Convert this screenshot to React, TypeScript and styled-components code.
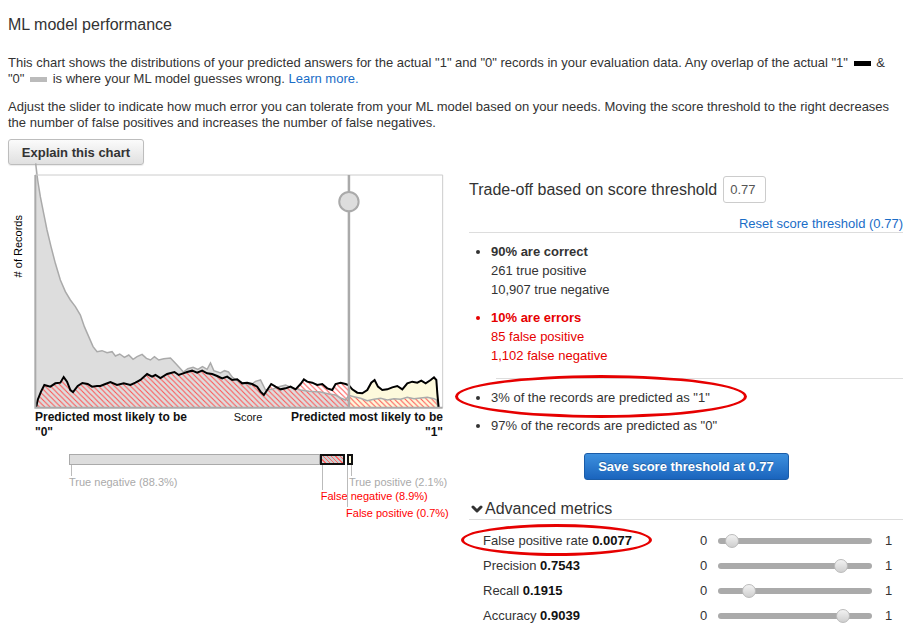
import React from 'react';
import styled, { createGlobalStyle, css } from 'styled-components';
import { ChevronDown } from 'lucide-react';

const FONT = '"Liberation Sans", Arial, Helvetica, sans-serif';
const RED = '#e60000';
const LINK = '#1a6dc7';

const GlobalStyle = createGlobalStyle`
  body {
    margin: 0;
    background: #fff;
    font-family: ${FONT};
    font-size: 13px;
    color: #333;
  }
`;

const Page = styled.div`
  width: 907px;
  box-sizing: border-box;
  padding: 15px 4px 0 8px;
`;

const Title = styled.h1`
  margin: 0;
  font-size: 16px;
  font-weight: normal;
  line-height: 20px;
  color: #333;
`;

const Paragraph = styled.p<{ $top: number }>`
  margin: ${({ $top }) => $top}px 0 0;
  line-height: 16px;
  white-space: nowrap;
`;

const Swatch = styled.span<{ $color: string }>`
  display: inline-block;
  width: 17px;
  height: 5px;
  margin: 0 2px;
  vertical-align: middle;
  background: ${({ $color }) => $color};
`;

const Link = styled.a`
  color: ${LINK};
  text-decoration: none;
  cursor: pointer;
`;

const ExplainButton = styled.button`
  margin-top: 8px;
  width: 136px;
  height: 26px;
  padding: 0;
  font: bold 13px ${FONT};
  color: #333;
  background: linear-gradient(#fbfbfb, #e0e0e0);
  border: 1px solid #bdbdbd;
  border-radius: 3px;
  box-shadow: 0 1px 1px rgba(0, 0, 0, 0.08);
`;

const Main = styled.div`
  display: flex;
  align-items: flex-start;
  gap: 8px;
`;

/* ---------- left: distribution chart ---------- */

const LeftColumn = styled.div`
  width: 453px;
  flex-shrink: 0;
`;

const ChartRow = styled.div`
  display: flex;
  margin-top: 10px;
`;

const YAxisLabel = styled.div`
  width: 27px;
  padding: 40px 0 0 4px;
  box-sizing: border-box;

  span {
    display: block;
    writing-mode: vertical-rl;
    transform: rotate(180deg);
    font-size: 11px;
    line-height: 13px;
    color: #000;
  }
`;

const ChartBox = styled.div`
  width: 408px;
  height: 233px;

  svg {
    display: block;
    width: 100%;
    height: 100%;
    overflow: visible;
  }
`;

const AxisLabels = styled.div`
  display: flex;
  justify-content: space-between;
  width: 408px;
  margin: 2px 0 0 27px;
  font-size: 12px;
  font-weight: bold;
  line-height: 15px;
  color: #111;
`;

const AxisEnd = styled.div<{ $align: 'left' | 'right' }>`
  text-align: ${({ $align }) => $align};
`;

const ScoreLabel = styled.div`
  margin-left: 18px;
  font-size: 11px;
  font-weight: normal;
`;

const BarWrap = styled.div`
  position: relative;
  width: 284px;
  height: 11px;
  margin: 14px 0 0 61px;
  display: flex;
`;

const segmentLook = {
  tn: css`
    background: #ddd;
    border: 1px solid #aaa;
  `,
  fn: css`
    background: repeating-linear-gradient(45deg, #ccc 0 2px, #f66 2px 3px);
    border: 2px solid #111;
  `,
  fp: css`
    background: #fff;
  `,
  tp: css`
    background: #fdf9dc;
    border: 2px solid #111;
  `,
};

type SegmentKind = keyof typeof segmentLook;

const Segment = styled.div<{ $kind: SegmentKind }>`
  box-sizing: border-box;
  height: 100%;
  ${({ $kind }) => segmentLook[$kind]}
`;

const Callout = styled.div`
  position: absolute;
  top: 100%;
  display: flex;
  flex-direction: column;
  align-items: flex-start;
`;

const Tick = styled.div<{ $length: number }>`
  width: 1px;
  height: ${({ $length }) => $length}px;
  margin-left: 2px;
  background: #bbb;
`;

const CalloutText = styled.div<{ $error?: boolean; $shift: number }>`
  margin-left: ${({ $shift }) => $shift}px;
  font-size: 11px;
  line-height: 13px;
  white-space: nowrap;
  color: ${({ $error }) => ($error ? '#f00' : '#aaa')};
`;

/* ---------- right: threshold summary ---------- */

const RightColumn = styled.div`
  width: 434px;
`;

const HeaderRow = styled.div`
  display: flex;
  align-items: center;
  gap: 6px;
  margin-top: 11px;
`;

const Heading = styled.h2`
  margin: 0;
  font-size: 16px;
  font-weight: normal;
  line-height: 20px;
  color: #333;
`;

const ThresholdInput = styled.input`
  width: 43px;
  height: 27px;
  box-sizing: border-box;
  padding: 0 0 0 6px;
  font: 13px ${FONT};
  color: #555;
  border: 1px solid #ccc;
  border-radius: 3px;
`;

const ResetLink = styled(Link)`
  display: block;
  margin-top: 13px;
  text-align: right;
  line-height: 16px;
`;

const Divider = styled.div<{ $inset?: number }>`
  height: 1px;
  margin-left: ${({ $inset = 0 }) => $inset}px;
  background: #ddd;
`;

const StatList = styled.ul<{ $bottom: number }>`
  margin: 0;
  padding: 9px 0 ${({ $bottom }) => $bottom}px 22px;
  list-style: disc;
`;

const StatItem = styled.li<{ $error?: boolean }>`
  position: relative;
  line-height: 19px;
  color: ${({ $error }) => ($error ? RED : '#333')};

  & + & {
    margin-top: 9px;
  }
`;

const Highlight = styled.span<{ $left: number; $top: number; $w: number; $h: number }>`
  position: absolute;
  left: ${({ $left }) => $left}px;
  top: ${({ $top }) => $top}px;
  width: ${({ $w }) => $w}px;
  height: ${({ $h }) => $h}px;
  box-sizing: border-box;
  border: 3px solid ${RED};
  border-radius: 50%;
  pointer-events: none;
`;

const SaveButton = styled.button`
  display: block;
  width: 205px;
  height: 27px;
  margin: 18px auto 0;
  font: bold 13px ${FONT};
  color: #fff;
  background: linear-gradient(#3d90de, #1a64bd);
  border: 1px solid #1a5ca8;
  border-radius: 3px;
  text-shadow: 0 -1px 0 rgba(0, 0, 0, 0.25);
`;

const AdvancedHeader = styled.div`
  display: flex;
  align-items: center;
  gap: 0;
  margin-top: 19px;
  font-size: 16px;
  line-height: 20px;
  color: #333;
`;

const MetricList = styled.div`
  margin-top: 4px;
  padding-top: 4px;
`;

const MetricRow = styled.div`
  position: relative;
  display: grid;
  grid-template-columns: 1fr 18px 154px 31px;
  align-items: center;
  height: 25px;
  padding-left: 14px;
  color: #333;

  b {
    color: #111;
  }
`;

const RangeEnd = styled.span<{ $pad?: number }>`
  padding-left: ${({ $pad = 0 }) => $pad}px;
  color: #333;
`;

const Track = styled.div`
  position: relative;
  height: 6px;
  border-radius: 3px;
  background: #aaa;
`;

const Thumb = styled.div`
  position: absolute;
  top: 50%;
  width: 14px;
  height: 14px;
  margin: -7px 0 0 -7px;
  box-sizing: border-box;
  border-radius: 50%;
  border: 1px solid #bbb;
  background: linear-gradient(#f2f2f2, #cfcfcf);
`;

/* ---------- chart data (drawn in a 3x coordinate space) ---------- */

const actualZero: number[][] = [
  [106, 10], [112, 60], [120, 110], [130, 160], [140, 210], [152, 260], [165, 310],
  [180, 360], [195, 395], [210, 420], [225, 440], [240, 465], [252, 500], [265, 530],
  [278, 560], [290, 575], [305, 572], [320, 578], [335, 575], [345, 588], [358, 582],
  [372, 592], [385, 585], [398, 598], [410, 590], [425, 583], [438, 595], [450, 600],
  [462, 590], [475, 600], [490, 596], [510, 594], [525, 610], [549, 636], [562, 626],
  [578, 622], [592, 628], [606, 620], [620, 628], [630, 609], [640, 632], [660, 639],
  [672, 632], [684, 636], [696, 652], [708, 660], [725, 668], [750, 675], [765, 664],
  [780, 660], [795, 690], [815, 688], [835, 680], [855, 675], [875, 684], [900, 690],
  [925, 694], [960, 696], [985, 702], [1005, 705], [1020, 714], [1035, 720], [1045, 706],
  [1060, 710], [1080, 715], [1100, 722], [1120, 718], [1140, 715], [1160, 720],
  [1180, 716], [1200, 718], [1220, 712], [1240, 716], [1260, 714], [1280, 712],
  [1300, 716], [1308, 720], [1312, 743],
];

const actualOne: number[][] = [
  [107, 743], [112, 720], [122, 695], [132, 675], [150, 680], [165, 670], [180, 668],
  [190, 651], [200, 665], [210, 690], [218, 696], [232, 678], [246, 669], [262, 672],
  [275, 680], [290, 678], [300, 678], [315, 672], [330, 666], [350, 675], [370, 670],
  [390, 675], [405, 668], [420, 660], [440, 642], [455, 650], [465, 645], [480, 654],
  [500, 642], [522, 636], [535, 645], [548, 640], [560, 636], [575, 632], [590, 638],
  [605, 632], [620, 640], [635, 642], [650, 648], [665, 655], [680, 650], [695, 660],
  [710, 658], [725, 670], [740, 668], [755, 672], [770, 680], [780, 695], [790, 705],
  [800, 690], [812, 672], [825, 680], [840, 688], [855, 685], [870, 680], [885, 688],
  [900, 672], [910, 658], [920, 665], [935, 668], [950, 675], [965, 672], [980, 685],
  [995, 690], [1005, 672], [1020, 668], [1035, 672], [1045, 676], [1055, 688],
  [1070, 698], [1085, 700], [1100, 690], [1112, 668], [1122, 660], [1132, 680],
  [1145, 690], [1160, 688], [1175, 682], [1190, 678], [1205, 688], [1220, 670],
  [1235, 665], [1250, 668], [1262, 662], [1275, 670], [1290, 660], [1300, 652],
  [1307, 660], [1310, 700], [1314, 743],
];

const BASE = 743;
const THRESHOLD_X = 1045;

const line = (pts: number[][]) => pts.map(([x, y], i) => `${i ? 'L' : 'M'}${x},${y}`).join(' ');
const area = (pts: number[][]) =>
  `M${pts[0][0]},${BASE} ${line(pts).replace(/^M/, 'L')} L${pts[pts.length - 1][0]},${BASE} Z`;

const DistributionChart = () => (
  <svg viewBox="104 45 1223 699" preserveAspectRatio="none">
    <defs>
      <pattern id="errorHatch" width="16" height="16" patternUnits="userSpaceOnUse">
        <path d="M0,0 L16,16 M-5,11 L5,21 M11,-5 L21,5" stroke="#ff4d4d" strokeWidth="3" />
      </pattern>
      <clipPath id="belowThreshold">
        <rect x="100" y="0" width={THRESHOLD_X - 100} height="760" />
      </clipPath>
      <clipPath id="aboveThreshold">
        <rect x={THRESHOLD_X} y="0" width="300" height="760" />
      </clipPath>
    </defs>

    {/* predicted "0" side: gray for actual 0, hatched false negatives */}
    <g clipPath="url(#belowThreshold)">
      <path d={area(actualZero)} fill="#ddd" />
      <path d={area(actualOne)} fill="url(#errorHatch)" />
    </g>

    {/* predicted "1" side: true positives and hatched false positives */}
    <g clipPath="url(#aboveThreshold)">
      <path d={area(actualOne)} fill="#fdf9dc" />
      <path d={area(actualZero)} fill="url(#errorHatch)" />
    </g>

    <path d={line(actualZero)} fill="none" stroke="#aaa" strokeWidth="1.5" vectorEffect="non-scaling-stroke" />
    <path d={line(actualOne)} fill="none" stroke="#000" strokeWidth="2" vectorEffect="non-scaling-stroke" />

    <path d="M104,45 L1326,45 L1326,743" fill="none" stroke="#ccc" strokeWidth="1" vectorEffect="non-scaling-stroke" />
    <path d="M105,45 L105,743 L1326,743" fill="none" stroke="#aaa" strokeWidth="2" vectorEffect="non-scaling-stroke" />

    <line x1={THRESHOLD_X} y1="45" x2={THRESHOLD_X} y2={BASE} stroke="#aaa" strokeWidth="2.5" vectorEffect="non-scaling-stroke" />
    <circle cx={THRESHOLD_X} cy="125" r="29" fill="#ddd" stroke="#aaa" strokeWidth="2" vectorEffect="non-scaling-stroke" />
  </svg>
);

/* ---------- confusion bar ---------- */

const BAR_WIDTH = 284;

const outcomes: { kind: SegmentKind; label: string; pct: number; tick: number; shift: number; error?: boolean }[] = [
  { kind: 'tn', label: 'True negative', pct: 88.3, tick: 11, shift: 0 },
  { kind: 'fn', label: 'False negative', pct: 8.9, tick: 25, shift: 1, error: true },
  { kind: 'fp', label: 'False positive', pct: 0.7, tick: 42, shift: 1, error: true },
  { kind: 'tp', label: 'True positive', pct: 2.1, tick: 11, shift: 0 },
];

const OutcomeBar = () => {
  let start = 0;
  const placed = outcomes.map((o) => {
    const left = (start / 100) * BAR_WIDTH;
    start += o.pct;
    return { ...o, left };
  });

  return (
    <BarWrap>
      {placed.map((o) => (
        <Segment key={o.kind} $kind={o.kind} style={{ width: (o.pct / 100) * BAR_WIDTH }} />
      ))}
      {placed.map((o) => (
        <Callout key={`${o.kind}-note`} style={{ left: o.kind === 'tp' ? o.left + 2 : o.left }}>
          <Tick $length={o.tick} />
          <CalloutText $error={o.error} $shift={o.shift}>
            {o.label} ({o.pct}%)
          </CalloutText>
        </Callout>
      ))}
    </BarWrap>
  );
};

/* ---------- metrics ---------- */

const metrics = [
  { name: 'False positive rate', value: '0.0077', pos: 0.089 },
  { name: 'Precision', value: '0.7543', pos: 0.8 },
  { name: 'Recall', value: '0.1915', pos: 0.2 },
  { name: 'Accuracy', value: '0.9039', pos: 0.814 },
];

const App = () => (
  <Page>
    <GlobalStyle />
    <Title>ML model performance</Title>

    <Paragraph $top={20}>
      This chart shows the distributions of your predicted answers for the actual "1" and "0" records in
      your evaluation data. Any overlap of the actual "1" <Swatch $color="#000" /> &amp;
      <br />
      "0" <Swatch $color="#bbb" /> is where your ML model guesses wrong. <Link>Learn more.</Link>
    </Paragraph>

    <Paragraph $top={12}>
      Adjust the slider to indicate how much error you can tolerate from your ML model based on your needs.
      Moving the score threshold to the right decreases
      <br />
      the number of false positives and increases the number of false negatives.
    </Paragraph>

    <ExplainButton>Explain this chart</ExplainButton>

    <Main>
      <LeftColumn>
        <ChartRow>
          <YAxisLabel>
            <span># of Records</span>
          </YAxisLabel>
          <ChartBox>
            <DistributionChart />
          </ChartBox>
        </ChartRow>

        <AxisLabels>
          <AxisEnd $align="left">
            Predicted most likely to be
            <br />
            "0"
          </AxisEnd>
          <ScoreLabel>Score</ScoreLabel>
          <AxisEnd $align="right">
            Predicted most likely to be
            <br />
            "1"
          </AxisEnd>
        </AxisLabels>

        <OutcomeBar />
      </LeftColumn>

      <RightColumn>
        <HeaderRow>
          <Heading>Trade-off based on score threshold</Heading>
          <ThresholdInput defaultValue="0.77" />
        </HeaderRow>
        <ResetLink>Reset score threshold (0.77)</ResetLink>
        <Divider />

        <StatList $bottom={13}>
          <StatItem>
            <b>90% are correct</b>
            <br />
            261 true positive
            <br />
            10,907 true negative
          </StatItem>
          <StatItem $error>
            <b>10% are errors</b>
            <br />
            85 false positive
            <br />
            1,102 false negative
          </StatItem>
        </StatList>

        <Divider $inset={27} />

        <StatList $bottom={0}>
          <StatItem>
            3% of the records are predicted as "1"
            <Highlight $left={-36} $top={-13} $w={292} $h={43} />
          </StatItem>
          <StatItem>97% of the records are predicted as "0"</StatItem>
        </StatList>

        <SaveButton>Save score threshold at 0.77</SaveButton>

        <AdvancedHeader>
          <ChevronDown size={16} strokeWidth={4.5} color="#333" />
          Advanced metrics
        </AdvancedHeader>
        <Divider />

        <MetricList>
          {metrics.map((m, i) => (
            <MetricRow key={m.name}>
              <span>
                {m.name} <b>{m.value}</b>
              </span>
              <RangeEnd>0</RangeEnd>
              <Track>
                <Thumb style={{ left: `${m.pos * 100}%` }} />
              </Track>
              <RangeEnd $pad={13}>1</RangeEnd>
              {i === 0 && <Highlight $left={-8} $top={-4} $w={191} $h={32} />}
            </MetricRow>
          ))}
        </MetricList>
      </RightColumn>
    </Main>
  </Page>
);

export default App;
